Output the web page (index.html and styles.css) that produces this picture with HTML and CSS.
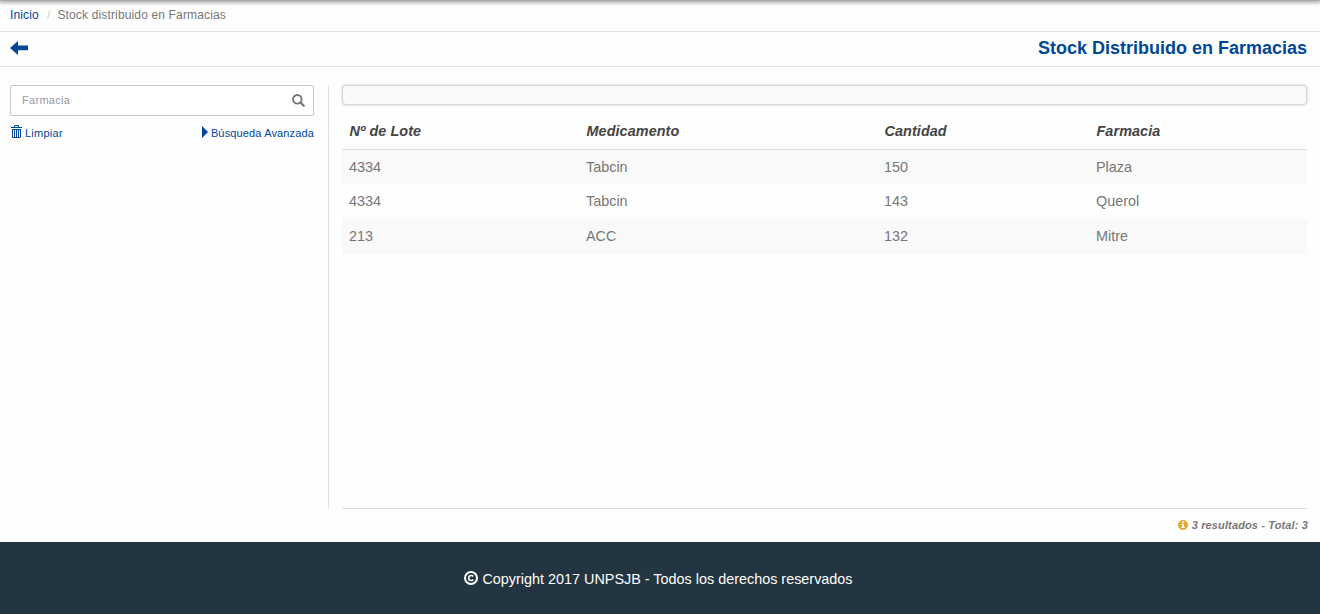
FILE: index.html
```
<!DOCTYPE html>
<html lang="es">
<head>
<meta charset="utf-8">
<title>Stock distribuido en Farmacias</title>
<link rel="stylesheet" href="styles.css">
</head>
<body>
<div class="navbar-edge"></div>
<nav class="breadcrumb"><a href="#">Inicio</a><span class="separator">/</span><span class="current">Stock distribuido en Farmacias</span></nav>
<header class="page-header">
  <a href="#" class="back" aria-label="Volver"><svg width="18" height="14" viewBox="0 0 18 14"><path fill="currentColor" d="M0 7 8 0V4.6H18V9.3H8V14Z"/></svg></a>
  <h1>Stock Distribuido en Farmacias</h1>
</header>
<main class="content">
  <aside class="filters">
    <div class="search">
      <span class="placeholder">Farmacia</span>
      <svg width="13" height="13" viewBox="0 0 13 13" fill="none" stroke="currentColor"><circle cx="5.3" cy="5.3" r="4.3" stroke-width="1.9"/><path d="m8.5 8.5 3.3 3.3" stroke-width="2.2" stroke-linecap="round"/></svg>
    </div>
    <div class="actions">
      <a href="#" class="clear"><svg width="11" height="13" viewBox="0 0 11 13" fill="none" stroke="currentColor"><path d="M0 2.5h11M3.5 2V.5h4V2M1.5 4.5v8h8v-8M1 4.5h9M3.5 5v7M5.5 5v7M7.5 5v7"/></svg><span class="clear-text">Limpiar</span></a>
      <a href="#" class="advanced"><svg width="6" height="12" viewBox="0 0 6 12"><path fill="currentColor" d="M0 0 6 6 0 12Z"/></svg><span class="advanced-text">Búsqueda Avanzada</span></a>
    </div>
  </aside>
  <section class="results">
    <div class="toolbar"></div>
    <table class="stock">
      <colgroup><col class="col-lot"><col class="col-med"><col class="col-qty"><col></colgroup>
      <thead><tr><th>Nº de Lote</th><th>Medicamento</th><th>Cantidad</th><th>Farmacia</th></tr></thead>
      <tbody>
        <tr><td>4334</td><td>Tabcin</td><td>150</td><td>Plaza</td></tr>
        <tr><td>4334</td><td>Tabcin</td><td>143</td><td>Querol</td></tr>
        <tr><td>213</td><td>ACC</td><td>132</td><td>Mitre</td></tr>
      </tbody>
    </table>
  </section>
</main>
<div class="summary"><svg width="10" height="10" viewBox="0 0 10 10"><circle cx="5" cy="5" r="5" fill="#dfab2c"/><path fill="#fff" d="M4 1.5h2V3H4ZM3.5 4H6v3h.8v1H3.3V7H4V5h-.5Z"/></svg><span class="summary-text">3 resultados - Total: 3</span></div>
<footer class="footer"><svg width="14" height="14" viewBox="0 0 14 14" fill="none" stroke="currentColor"><circle cx="7" cy="7" r="6" stroke-width="2"/><path d="M9.3 5.4C8.7 4.8 8.1 4.5 7.1 4.5 5.7 4.5 4.7 5.5 4.7 7s1 2.5 2.4 2.5c1 0 1.6-.3 2.2-.9" stroke-width="1.5"/></svg><span class="copyright">Copyright 2017 UNPSJB - Todos los derechos reservados</span></footer>
</body>
</html>
```
FILE: styles.css
```
* { box-sizing: border-box; }
body {
  margin: 0;
  height: 614px;
  display: flex;
  flex-direction: column;
  overflow: hidden;
  background: #fefefe;
  color: #777;
  font-family: "Liberation Sans", Arial, sans-serif;
}
a { color: #004795; text-decoration: none; }
svg { display: block; flex: none; }
span, h1 { white-space: nowrap; }
.navbar-edge { height: 1px; flex: none; background: #aaa; box-shadow: 0 0 4px 1px #777; }
.breadcrumb {
  height: 31px;
  flex: none;
  display: flex;
  align-items: center;
  padding: 0 10px 3px;
  border-bottom: 1px solid #e2e2e2;
  font-size: 12px;
  letter-spacing: 0.15px;
}
.separator { padding: 0 7px 0 8px; color: #ccc; }
.page-header {
  height: 35px;
  flex: none;
  display: flex;
  align-items: center;
  justify-content: space-between;
  padding: 0 13px 2px 10px;
  border-bottom: 1px solid #e2e2e2;
}
h1 { margin: 0; color: #004795; font-size: 18px; line-height: 20px; }
.content { height: 442px; flex: none; display: flex; padding: 18px 13px 0 10px; }
.filters { width: 319px; padding-right: 14px; border-right: 1px solid #e0e0e0; }
.search {
  height: 31px;
  display: flex;
  align-items: center;
  justify-content: space-between;
  padding: 0 8px 1px 11px;
  border: 1px solid #c6c6c6;
  border-radius: 2px;
  background: #fff;
  font-size: 11px;
}
.placeholder { color: #999; letter-spacing: 0.3px; }
.actions { display: flex; justify-content: space-between; padding: 9px 0 0 1px; font-size: 11px; letter-spacing: 0.14px; }
.clear, .advanced { display: flex; align-items: center; height: 15px; }
.clear { gap: 3px; letter-spacing: 0.25px; }
.clear svg, .advanced svg { margin-bottom: 2px; }
.advanced { gap: 3px; }
.results { flex: 1; margin-left: 13px; border-bottom: 1px solid #ddd; }
.toolbar { height: 20px; border: 1px solid #d5d5d5; border-radius: 4px; background: #fafafa; box-shadow: 0 0 3px #ccc; }
.stock { width: 100%; margin-top: 8px; border-collapse: separate; border-spacing: 0; table-layout: fixed; font-size: 14.4px; }
.col-lot { width: 237px; }
.col-med { width: 298px; }
.col-qty { width: 212px; }
th, td { padding: 0 7px; text-align: left; }
th { height: 37px; border-bottom: 1px solid #ddd; color: #444; font-style: italic; padding-left: 7.5px; letter-spacing: 0.08px; }
td { height: 35px; padding-bottom: 1px; }
tbody tr:first-child td { height: 34px; padding-bottom: 0; }
tbody tr:nth-child(odd) { background: #f9f9f9; }
.summary { height: 33px; flex: none; display: flex; align-items: center; justify-content: flex-end; gap: 4px; padding: 0 12px 2px 0; font-size: 11px; font-style: italic; font-weight: bold; letter-spacing: 0.13px; }
.footer { height: 72px; flex: none; display: flex; align-items: center; justify-content: center; gap: 4px; padding: 2px 3px 0 0; background: #223540; color: #fff; font-size: 14.4px; }
.footer svg { margin-bottom: 2px; }
```
